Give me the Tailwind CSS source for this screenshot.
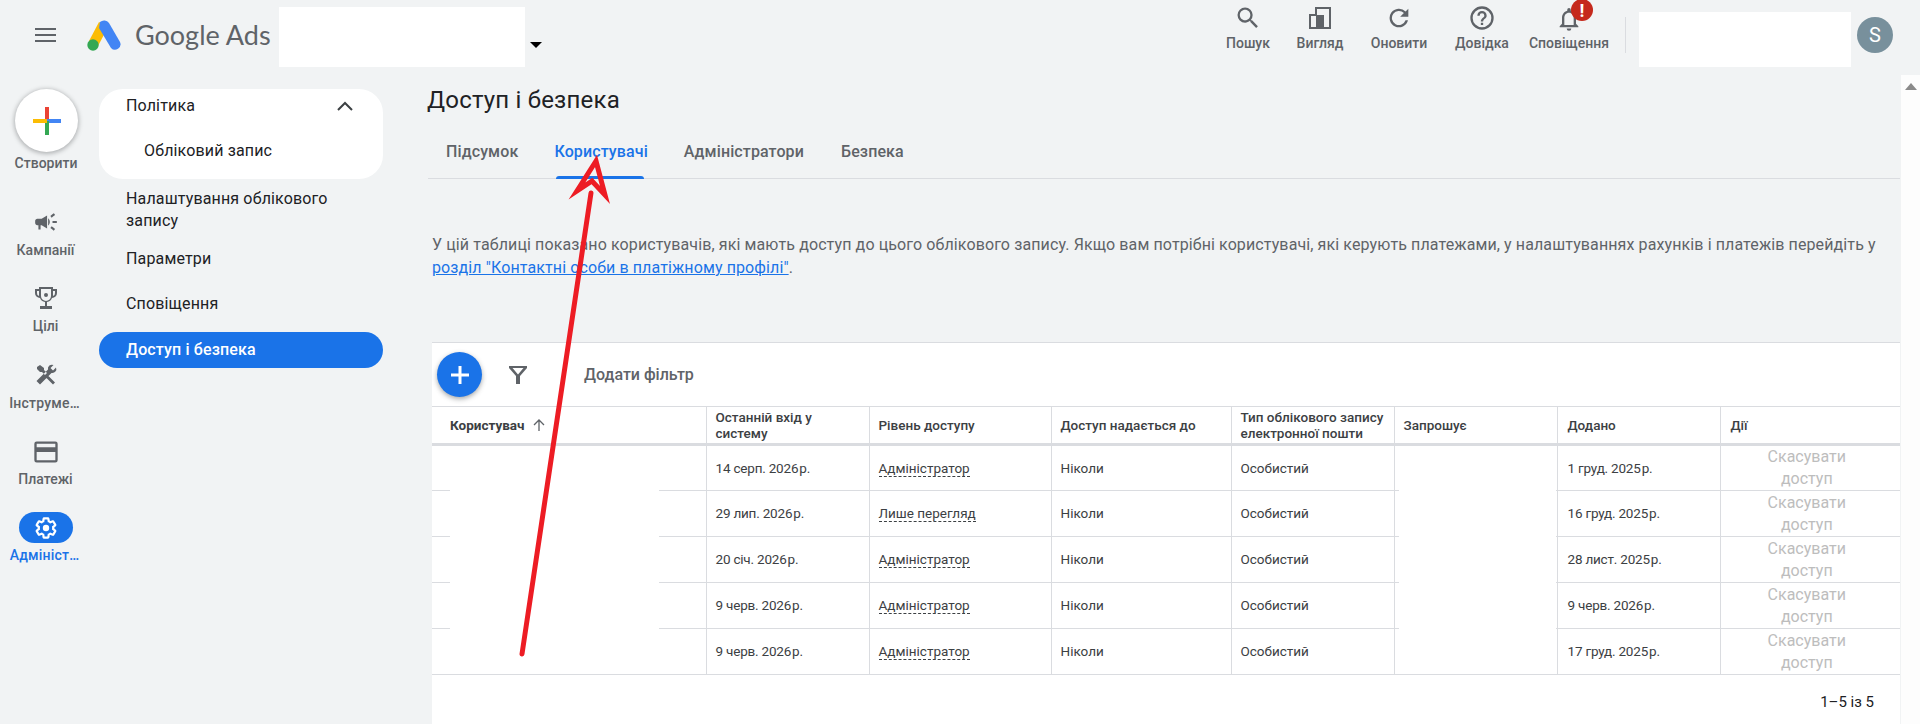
<!DOCTYPE html>
<html lang="uk">

<head>
  <meta charset="UTF-8">
  <title>Google Ads - Доступ і безпека</title>
  <script src="https://cdn.jsdelivr.net/npm/@tailwindcss/browser@4"></script>
</head>

<body class="relative h-[724px] w-[1920px] overflow-hidden bg-[#f1f3f4] font-['Roboto',sans-serif] text-[#3c4043]">

  <!-- top bar -->
  <header class="flex h-[70px] items-center pl-[35px]">
    <svg class="w-[21px] h-[14px] shrink-0" viewBox="0 0 21 14"><path d="M0 0h21v2H0zM0 6h21v2H0zM0 12h21v2H0z" fill="#5f6368" /></svg>
    <svg class="ml-[31px] w-[34px] h-[31px] shrink-0" viewBox="0 0 34 31">
      <path d="M12 2 2 21l9 5 10-19z" fill="#fbbc04" />
      <path d="M13 2a6 6 0 0 1 9 1l11 19a5.5 5.5 0 0 1-9 6L12 8z" fill="#4285f4" />
      <circle cx="6" cy="25" r="5.7" fill="#34a853" />
    </svg>
    <div class="ml-[14px] w-[134px] text-[27px] text-[#5f6368] font-['Lato',sans-serif] whitespace-nowrap">Google Ads</div>
    <div class="ml-[10px] mt-[4px] w-[246px] h-[60px] bg-white"></div>
    <div class="ml-[5px] mt-[20px] border-x-[6px] border-t-[6px] border-x-transparent border-t-black"></div>

    <div class="ml-auto self-start pt-[4px] flex text-[14px] font-medium text-[#5f6368]">
      <div class="w-[72px] flex flex-col items-center">
        <svg class="w-[28px] h-[28px]" viewBox="0 0 24 24" fill="#5f6368"><path d="M15.5 14h-.79l-.28-.27A6.471 6.471 0 0 0 16 9.5 6.5 6.5 0 1 0 9.5 16c1.61 0 3.09-.59 4.23-1.57l.27.28v.79l5 4.99L20.49 19l-4.99-5zm-6 0C7.01 14 5 11.99 5 9.5S7.01 5 9.5 5 14 7.01 14 9.5 11.99 14 9.5 14z" /></svg>
        <span class="mt-[1px] leading-[20px]">Пошук</span>
      </div>
      <div class="w-[72px] flex flex-col items-center">
        <svg class="w-[28px] h-[28px]" viewBox="0 0 28 28" fill="none"><path d="M4 11h6V4h14v20H4z" stroke="#5f6368" stroke-width="2" /><rect x="10" y="11" width="8" height="13" fill="#5f6368" /></svg>
        <span class="mt-[1px] leading-[20px]">Вигляд</span>
      </div>
      <div class="w-[86px] flex flex-col items-center">
        <svg class="w-[28px] h-[28px]" viewBox="0 0 24 24" fill="#5f6368"><path d="M17.65 6.35A8 8 0 1 0 19.7 14h-2.1a6 6 0 1 1-1.4-6.2L13 11h7V4z" /></svg>
        <span class="mt-[1px] leading-[20px]">Оновити</span>
      </div>
      <div class="w-[80px] flex flex-col items-center">
        <svg class="w-[28px] h-[28px]" viewBox="0 0 24 24" fill="#5f6368"><path d="M11 18h2v-2h-2zm1-16a10 10 0 1 0 0 20 10 10 0 0 0 0-20zm0 18a8 8 0 1 1 0-16 8 8 0 0 1 0 16zm0-14a4 4 0 0 0-4 4h2a2 2 0 1 1 4 0c0 2-3 1.75-3 5h2c0-2.25 3-2.5 3-5a4 4 0 0 0-4-4z" /></svg>
        <span class="mt-[1px] leading-[20px]">Довідка</span>
      </div>
      <div class="relative w-[94px] flex flex-col items-center">
        <svg class="w-[28px] h-[28px]" viewBox="0 0 24 24" fill="#5f6368"><path d="M12 23a2 2 0 0 0 2-2h-4a2 2 0 0 0 2 2zm6-6v-5c0-3-1.6-5.6-4.5-6.3V5a1.5 1.5 0 0 0-3 0v.7C7.6 6.4 6 9 6 12v5l-2 2v1h16v-1zm-2 1H8v-6c0-2.5 1.5-4.5 4-4.5s4 2 4 4.5z" /></svg>
        <span class="mt-[1px] leading-[20px]">Сповіщення</span>
        <div class="absolute left-[49px] top-[-5px] w-[22px] h-[22px] rounded-full bg-[#c5291c] text-white text-[18px] font-bold flex items-center justify-center">!</div>
      </div>
    </div>
    <div class="ml-[9px] w-px h-[36px] bg-[#dadce0]"></div>
    <div class="ml-[13px] mt-[8px] w-[212px] h-[55px] bg-white"></div>
    <div class="ml-[6px] mr-[27px] w-[36px] h-[36px] rounded-full bg-[#78909c] text-white text-[20px] flex items-center justify-center">S</div>
  </header>

  <div class="flex">
    <!-- icon rail -->
    <nav class="w-[91px] shrink-0 flex flex-col items-center text-[14px] font-medium text-[#5f6368]">
      <div class="mt-[19px] ml-[2px] w-[63px] h-[63px] rounded-full bg-white shadow-[0_1px_4px_1px_rgba(60,64,67,0.35)] flex items-center justify-center">
        <svg class="w-[28px] h-[28px]" viewBox="0 0 28 28">
          <rect x="12" y="0" width="4" height="14" fill="#ea4335" />
          <rect x="14" y="12" width="14" height="4" fill="#4285f4" />
          <rect x="12" y="14" width="4" height="14" fill="#34a853" />
          <rect x="0" y="12" width="14" height="4" fill="#fbbc04" />
        </svg>
      </div>
      <span class="mt-[3px] ml-[1px] leading-[16px]">Створити</span>

      <svg class="mt-[38px] w-[26px] h-[26px]" viewBox="0 0 24 24" fill="#5f6368"><path d="M18 11v2h4v-2h-4zm-2 6.61c.96.71 2.21 1.65 3.2 2.39.4-.53.8-1.07 1.2-1.6-.99-.74-2.24-1.68-3.2-2.4-.4.54-.8 1.08-1.2 1.61zM20.4 5.6c-.4-.53-.8-1.07-1.2-1.6-.99.74-2.24 1.68-3.2 2.4.4.53.8 1.07 1.2 1.6.96-.72 2.21-1.65 3.2-2.4zM4 9c-1.1 0-2 .9-2 2v2c0 1.1.9 2 2 2h1v4h2v-4h1l5 3V6L8 9H4zm11.5 3c0-1.33-.58-2.53-1.5-3.35v6.69c.92-.81 1.5-2.01 1.5-3.34z" /></svg>
      <span class="mt-[7px] leading-[16px]">Кампанії</span>

      <svg class="mt-[28px] w-[24px] h-[24px]" viewBox="0 0 24 24" fill="#5f6368"><path d="M5 1h14v2h4v4a5 5 0 0 1-5 5 6 6 0 0 1-5 4v4h5v3H6v-3h5v-4a6 6 0 0 1-5-4 5 5 0 0 1-5-5V3h4zm2 2v7a5 5 0 0 0 10 0V3zM3 5v2a3 3 0 0 0 2 3V5zm16 0v5a3 3 0 0 0 2-3V5zm-7 2a2 2 0 1 1 0 4 2 2 0 0 1 0-4z" fill-rule="evenodd" /></svg>
      <span class="mt-[8px] leading-[16px]">Цілі</span>

      <svg class="mt-[29px] w-[24px] h-[24px]" viewBox="0 0 24 24" fill="#5f6368"><path d="M21 19.5 14.5 13l-2 2 6.5 6.5zM17.5 10a4 4 0 0 0 4.5-5.5L19 7.5 16.5 5l3-3A4 4 0 0 0 14 6.5L2.500 18l3.500 3.500zM3 4l3-2 4 3v2l3 3-2 2-3-3H6L3 6z" /></svg>
      <span class="mt-[8px] -ml-[2px] tracking-[0.2px] leading-[16px]">Інструме…</span>

      <svg class="mt-[27px] w-[28px] h-[28px]" viewBox="0 0 24 24" fill="#5f6368"><path d="M20 3H4a2 2 0 0 0-2 2v14a2 2 0 0 0 2 2h16a2 2 0 0 0 2-2V5a2 2 0 0 0-2-2zm0 16H4v-7h16zm0-11H4V5h16z" /></svg>
      <span class="mt-[5px] leading-[16px]">Платежі</span>

      <div class="mt-[25px] w-[54px] h-[31px] rounded-full bg-[#1a73e8] flex items-center justify-center">
        <svg class="w-[24px] h-[24px]" viewBox="0 0 24 24"><path d="M19.14 12.94c.04-.3.06-.61.06-.94 0-.32-.02-.64-.07-.94l2.03-1.58c.18-.14.23-.41.12-.61l-1.92-3.32c-.12-.22-.37-.29-.59-.22l-2.39.96c-.5-.38-1.03-.7-1.62-.94l-.36-2.54c-.04-.24-.24-.41-.48-.41h-3.84c-.24 0-.43.17-.47.41l-.36 2.54c-.59.24-1.13.57-1.62.94l-2.39-.96c-.22-.08-.47 0-.59.22L2.74 8.87c-.12.21-.08.47.12.61l2.03 1.58c-.05.3-.09.63-.09.94s.02.64.07.94l-2.03 1.58c-.18.14-.23.41-.12.61l1.92 3.32c.12.22.37.29.59.22l2.39-.96c.5.38 1.03.7 1.62.94l.36 2.54c.05.24.24.41.48.41h3.84c.24 0 .44-.17.47-.41l.36-2.54c.59-.24 1.13-.56 1.62-.94l2.39.96c.22.08.47 0 .59-.22l1.92-3.32c.12-.22.07-.47-.12-.61l-2.01-1.58z" fill="none" stroke="white" stroke-width="2.2" /><circle cx="12" cy="12" r="3.2" fill="white" /></svg>
      </div>
      <span class="mt-[4px] -ml-[2px] tracking-[0.2px] leading-[16px] text-[#1a73e8]">Адмініст…</span>
    </nav>

    <!-- section menu -->
    <aside class="w-[284px] ml-[8px] mt-[19px] shrink-0 text-[16px] tracking-[0.15px] text-[#202124]">
      <div class="h-[90px] rounded-[24px] bg-white">
        <div class="flex items-center justify-between pl-[27px] pr-[30px] pt-[7px] h-[27px]">
          <span>Політика</span>
          <svg class="w-[16px] h-[10px]" viewBox="0 0 16 10"><path d="M1 9l7-7 7 7" fill="none" stroke="#3c4043" stroke-width="2" /></svg>
        </div>
        <div class="pl-[45px] pt-[23px]">Обліковий запис</div>
      </div>
      <div class="pl-[27px] pt-[9px] leading-[22px]">Налаштування облікового<br>запису</div>
      <div class="pl-[27px] pt-[16px] leading-[22px]">Параметри</div>
      <div class="pl-[27px] pt-[23px] leading-[22px]">Сповіщення</div>
      <div class="mt-[17px] h-[36px] rounded-full bg-[#1a73e8] pl-[27px] flex items-center font-medium text-white">Доступ і безпека</div>
    </aside>

    <!-- main -->
    <main class="ml-[45px] flex-1 min-w-0">
      <h1 class="mt-[14px] -ml-[1px] text-[24px] tracking-[0.2px] leading-[32px] text-[#202124]">Доступ і безпека</h1>
      <div class="mt-[16px] h-[47px] flex border-b border-[#dadce0] mr-[20px] pl-[18px] text-[16px] tracking-[0.12px] font-medium text-[#5f6368]">
        <span class="pt-[8px]">Підсумок</span>
        <span class="relative ml-[36px] pt-[8px] text-[#1a73e8]">Користувачі<span class="absolute left-[2px] right-[4px] bottom-[-1px] h-[3px] rounded-t bg-[#1a73e8]"></span></span>
        <span class="ml-[36px] pt-[8px]">Адміністратори</span>
        <span class="ml-[37px] pt-[8px]">Безпека</span>
      </div>
      <p class="ml-[4px] mt-[54px] mr-[10px] text-[16px] tracking-[0.11px] leading-[23px] text-[#5f6368]">У цій таблиці показано користувачів, які мають доступ до цього облікового запису. Якщо вам потрібні користувачі, які керують платежами, у налаштуваннях рахунків і платежів перейдіть у <br><span class="text-[#1a73e8] underline">розділ "Контактні особи в платіжному профілі"</span>.</p>

      <!-- table card -->
      <section class="ml-[4px] mt-[63px] w-[1468px] h-[382px] bg-white border-t border-[#dadce0]">
        <div class="h-[63px] flex items-center pl-[5px]">
          <div class="w-[45px] h-[45px] rounded-full bg-[#1a73e8] shadow-[0_2px_5px_rgba(60,64,67,0.45)] flex items-center justify-center">
            <svg class="w-[20px] h-[20px]" viewBox="0 0 20 20"><path d="M8.5 1h3v18h-3zM1 8.5h18v3H1z" fill="white" /></svg>
          </div>
          <svg class="ml-[24px] w-[24px] h-[24px]" viewBox="0 0 24 24" fill="#5f6368"><path d="M3 3h18v2l-7 8v8h-4v-8L3 5zm3.5 2 5.5 6.5L17.5 5z" fill-rule="evenodd" /></svg>
          <span class="ml-[54px] text-[16px] font-medium text-[#5f6368]">Додати фільтр</span>
        </div>

        <table class="w-full table-fixed border-collapse text-[13.5px] text-[#3c4043]">
          <colgroup>
            <col class="w-[274px]"><col class="w-[163px]"><col class="w-[182px]"><col class="w-[180px]"><col class="w-[163px]"><col class="w-[163px]"><col class="w-[163px]"><col>
          </colgroup>
          <thead>
            <tr class="h-[38px] border-y border-b-[3px] border-y-[#dadce0] font-medium">
              <th class="pl-[18px] text-left font-bold"><span class="inline-flex items-center gap-[7px]">Користувач
                  <svg class="w-[14px] h-[14px]" viewBox="0 0 14 14"><path d="M7 13V2M2 7l5-5 5 5" fill="none" stroke="#5f6368" stroke-width="1.3" /></svg></span></th>
              <th class="border-l border-[#dadce0] pl-[9px] text-left font-medium leading-[16px]">Останній вхід у<br>систему</th>
              <th class="border-l border-[#dadce0] pl-[9px] text-left font-medium">Рівень доступу</th>
              <th class="border-l border-[#dadce0] pl-[9px] text-left font-medium">Доступ надається до</th>
              <th class="border-l border-[#dadce0] pl-[9px] text-left font-medium leading-[16px]">Тип облікового запису<br>електронної пошти</th>
              <th class="border-l border-[#dadce0] pl-[9px] text-left font-medium">Запрошує</th>
              <th class="border-l border-[#dadce0] pl-[10px] text-left font-medium">Додано</th>
              <th class="border-l border-[#dadce0] pl-[10px] text-left font-medium">Дії</th>
            </tr>
          </thead>
          <tbody id="rows"></tbody>
        </table>

        <div class="mt-[16px] pr-[26px] text-right text-[15px] text-[#202124]">1–5 із 5</div>
      </section>
    </main>

    <!-- scrollbar -->
    <div class="absolute right-0 top-[75px] bottom-0 w-[19px] bg-[#fdfdfd]">
      <div class="mx-auto mt-[8px] w-0 border-x-[6px] border-b-[7px] border-x-transparent border-b-[#8a8a8a]"></div>
    </div>
  </div>

  <!-- blanked out cells -->
  <div class="absolute left-[450px] top-[446px] w-[209px] h-[228px] bg-white"></div>
  <div class="absolute left-[1399px] top-[446px] w-[157px] h-[228px] bg-white"></div>

  <!-- annotation arrow -->
  <svg class="absolute left-0 top-0 pointer-events-none" width="1920" height="724" viewBox="0 0 1920 724">
    <path d="M522 654 591 193" fill="none" stroke="#ed1c24" stroke-width="5" stroke-linecap="round" />
    <path d="M596 161 577 191 592 181 605 195z" fill="none" stroke="#ed1c24" stroke-width="5" stroke-miterlimit="10" />
  </svg>

  <script>
    const rows = [
      ['14 серп. 2026', 'Адміністратор', '1 груд. 2025'],
      ['29 лип. 2026', 'Лише перегляд', '16 груд. 2025'],
      ['20 січ. 2026', 'Адміністратор', '28 лист. 2025'],
      ['9 черв. 2026', 'Адміністратор', '9 черв. 2026'],
      ['9 черв. 2026', 'Адміністратор', '17 груд. 2025'],
    ];
    const year = (d) => `<span class="tracking-[-0.2px]">${d}<span class="ml-[1px]">р.</span></span>`;
    document.getElementById('rows').innerHTML = rows.map(r => `
      <tr class="h-[46px] border-b border-[#dadce0]">
        <td></td>
        <td class="border-l border-[#dadce0] pl-[9px]">${year(r[0])}</td>
        <td class="border-l border-[#dadce0] pl-[9px]"><span class="border-b border-dashed border-[#3c4043]">${r[1]}</span></td>
        <td class="border-l border-[#dadce0] pl-[9px]">Ніколи</td>
        <td class="border-l border-[#dadce0] pl-[9px]">Особистий</td>
        <td class="border-l border-[#dadce0]"></td>
        <td class="border-l border-[#dadce0] pl-[10px]">${year(r[2])}</td>
        <td class="border-l border-[#dadce0] pr-[7px] text-center text-[16px] leading-[22px] text-[#bdbdbd]">Скасувати<br>доступ</td>
      </tr>`).join('');
  </script>
</body>

</html>
